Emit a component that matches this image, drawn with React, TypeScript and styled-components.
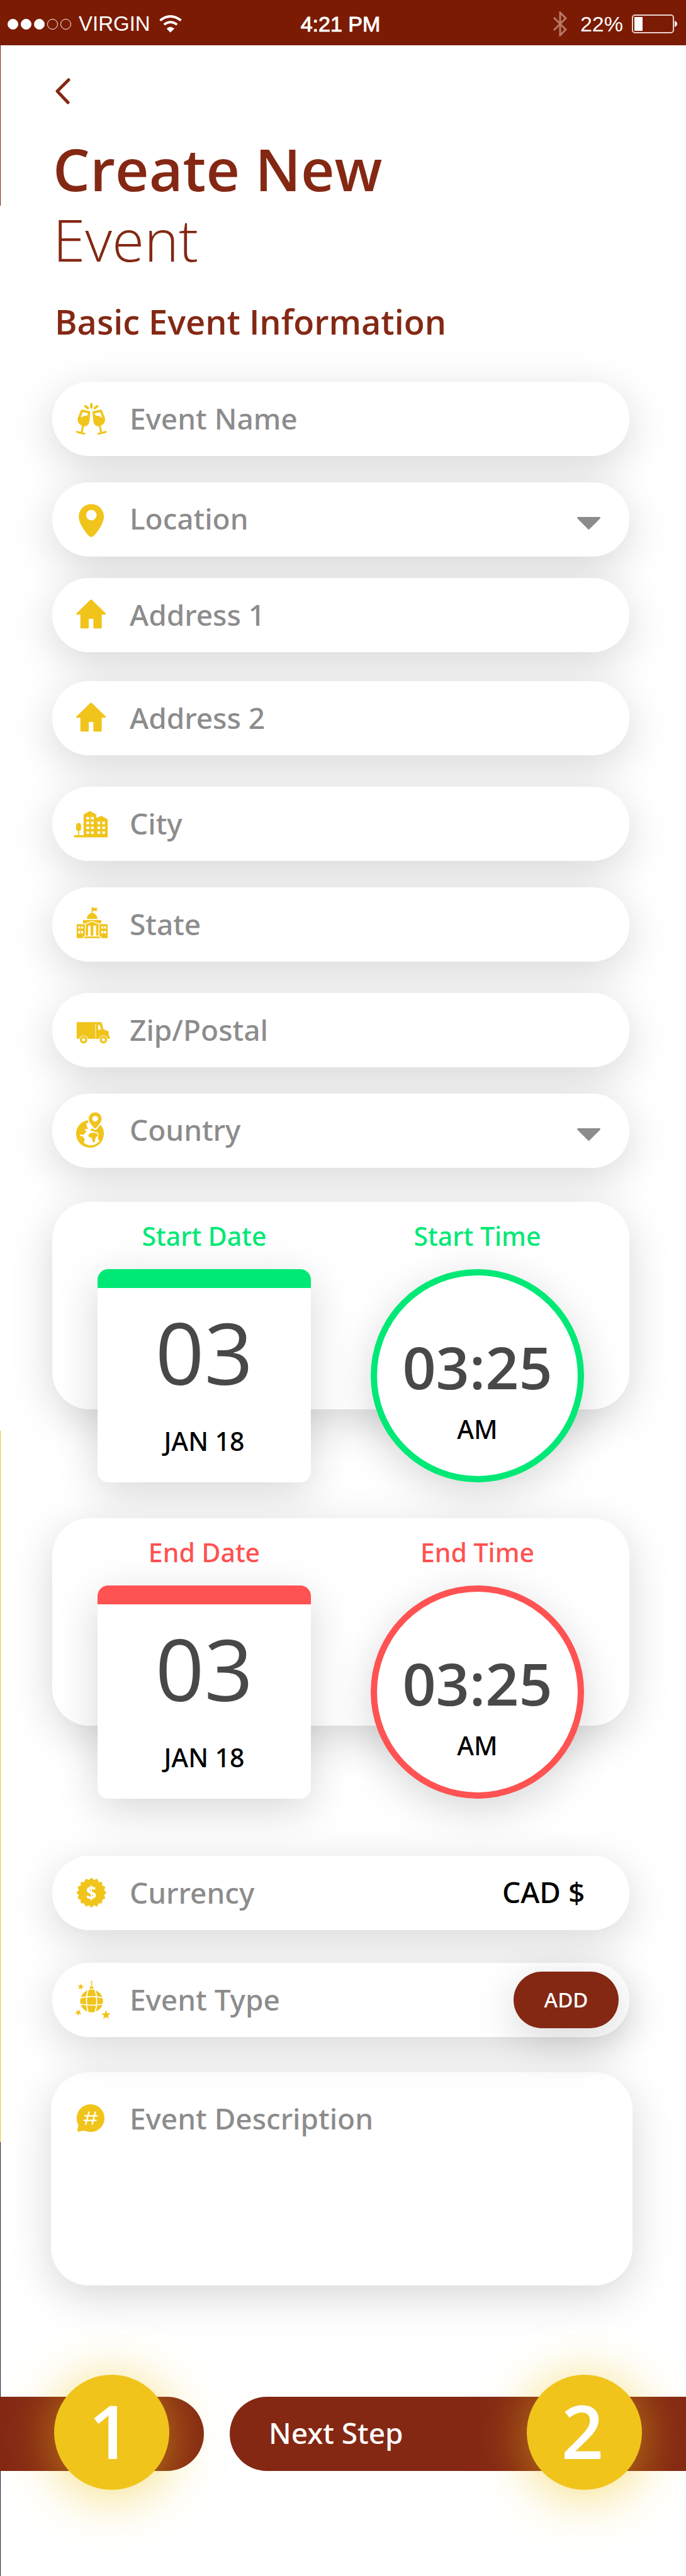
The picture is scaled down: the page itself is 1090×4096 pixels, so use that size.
import React from 'react';
import styled, { createGlobalStyle, css } from 'styled-components';

const color = {
  maroon: '#842814',
  statusBar: '#7b1b03',
  yellow: '#f0c41b',
  green: '#00e976',
  red: '#ff5252',
  grey: '#8c8c8c',
  digits: '#484848',
};

const softShadow = '0 17px 68px rgba(0, 0, 0, 0.16)';

const mediumText = css`
  font-family: 'Noto Sans', 'Open Sans', sans-serif;
  font-weight: 500;
`;

const GlobalStyle = createGlobalStyle`
  *, *::before, *::after { box-sizing: border-box; }
  body {
    margin: 0;
    background: #fff;
    font-family: 'Open Sans', 'Noto Sans', sans-serif;
  }
  button, input, select, textarea {
    margin: 0;
    padding: 0;
    border: 0;
    background: none;
    font: inherit;
    color: inherit;
    outline: none;
  }
  button { cursor: pointer; }
`;

const Page = styled.div`
  min-height: 100vh;
  overflow: hidden;
  background: linear-gradient(
      ${color.maroon} 327px,
      transparent 327px 2275px,
      ${color.yellow} 2275px 3406px,
      #1c2438 3406px
    )
    left top / 1px 100% no-repeat;
`;

/* ---------- status bar ---------- */

const StatusBar = styled.header`
  display: grid;
  grid-template-columns: 1fr auto 1fr;
  align-items: center;
  height: 72px;
  padding: 4px 14px 0 6px;
  background: ${color.statusBar};
  color: #fff;
  font-family: 'Liberation Sans', Arial, sans-serif;
  font-size: 34px;
  line-height: 40px;
`;

const StatusGroup = styled.div<{ $end?: boolean }>`
  display: flex;
  align-items: center;
  justify-content: ${(p) => (p.$end ? 'flex-end' : 'flex-start')};
`;

const Dots = styled.div`
  display: flex;
  gap: 4px;
  margin: 0 12px 0 6px;
`;

const Dot = styled.span<{ $on: boolean }>`
  width: 17px;
  height: 17px;
  border: 1px solid #fff;
  border-radius: 50%;
  background: ${(p) => (p.$on ? '#fff' : 'transparent')};
`;

const Carrier = styled.span`
  font-size: 33px;
`;

const Clock = styled.time`
  -webkit-text-stroke: 1px #fff;
`;

const WifiIcon = styled.svg`
  width: 36px;
  height: 28px;
  margin-left: 14px;
`;

const BluetoothIcon = styled.svg`
  width: 22px;
  height: 40px;
  margin-right: 21px;
`;

const BatteryIcon = styled.svg`
  width: 72px;
  height: 30px;
  margin-left: 14px;
`;

/* ---------- heading ---------- */

const Main = styled.main`
  padding: 52px 90px 0 83px;
  color: ${color.maroon};
`;

const BackButton = styled.button`
  display: block;
  width: 34px;
  height: 42px;
  svg { display: block; width: 34px; height: 42px; }
`;

const Title = styled.h1`
  margin: 46px 0 0;
  padding-left: 1px;
  font-size: 93px;
  font-weight: 600;
  line-height: 112px;
  span { display: block; font-weight: 300; }
`;

const Subtitle = styled.h2`
  margin: 38px 0 59px;
  padding-left: 4px;
  font-size: 54px;
  font-weight: 600;
  line-height: 74px;
`;

/* ---------- form ---------- */

const Form = styled.form`
  display: flex;
  flex-direction: column;
  isolation: isolate;
`;

const Field = styled.label<{ $gap: number }>`
  position: relative;
  display: flex;
  align-items: center;
  gap: 31px;
  height: 118px;
  margin-bottom: ${(p) => p.$gap}px;
  padding: 0 20px 0 32px;
  border-radius: 59px;
  background: #fff;
  color: ${color.grey};
  ${mediumText}
  font-size: 46px;
  line-height: 62px;

  /* the shadow sits below every sibling surface */
  &::before {
    content: '';
    position: absolute;
    inset: 0;
    z-index: -1;
    border-radius: inherit;
    box-shadow: ${softShadow};
  }
`;

const IconBox = styled.svg`
  flex: none;
  width: 60px;
  height: 60px;
  overflow: visible;
  fill: ${color.yellow};
`;

const Input = styled.input`
  flex: 1;
  min-width: 0;
  height: 76px;
  padding-bottom: 3px;
  &::placeholder { color: ${color.grey}; opacity: 1; }
`;

const Select = styled.select`
  flex: 1;
  min-width: 0;
  height: 76px;
  padding-bottom: 4px;
  appearance: none;
`;

const FieldText = styled.span`
  flex: 1;
  padding-bottom: 3px;
`;

const CurrencySelect = styled.select`
  height: 76px;
  margin-right: 50px;
  padding-bottom: 4px;
  appearance: none;
  color: #000;
`;

const Caret = styled.svg`
  flex: none;
  width: 37px;
  height: 20px;
  margin: 12px 26px 0 0;
  fill: ${color.grey};
`;

const AddButton = styled.button`
  flex: none;
  width: 167px;
  height: 90px;
  margin-right: -3px;
  border-radius: 45px;
  background: ${color.maroon};
  box-shadow: ${softShadow};
  color: #fff;
  font-size: 33px;
  line-height: 44px;
`;

const Description = styled.label`
  position: relative;
  display: flex;
  align-items: flex-start;
  gap: 31px;
  height: 339px;
  margin: 0 -5px 0 -2px;
  padding: 43px 40px 32px 34px;
  color: ${color.grey};
  ${mediumText}
  font-size: 46px;
  line-height: 62px;

  &::before {
    content: '';
    position: absolute;
    inset: 0;
    z-index: -2;
    border-radius: 60px;
    background: #fff;
    box-shadow: ${softShadow};
  }
`;

const TextArea = styled.textarea`
  flex: 1;
  height: 100%;
  resize: none;
  line-height: 60px;
  &::placeholder { color: ${color.grey}; opacity: 1; }
`;

/* ---------- date and time panels ---------- */

const Panel = styled.section<{ $gap: number }>`
  position: relative;
  display: grid;
  grid-template-columns: 1fr 1fr;
  column-gap: 95px;
  margin-bottom: ${(p) => p.$gap}px;
  padding: 27px 72px 0;
  border-radius: 60px;
  background: #fff;

  &::before {
    content: '';
    position: absolute;
    inset: 0;
    z-index: -1;
    border-radius: inherit;
    box-shadow: ${softShadow};
  }
`;

const PickerColumn = styled.div`
  display: flex;
  flex-direction: column;
  margin-bottom: -116px;
  text-align: center;
`;

const PickerLabel = styled.span<{ $tone: string }>`
  margin-bottom: 26px;
  color: ${(p) => p.$tone};
  ${mediumText}
  font-size: 41px;
  line-height: 54px;
`;

const DateCard = styled.button<{ $tone: string }>`
  display: flex;
  flex-direction: column;
  align-items: center;
  width: 100%;
  aspect-ratio: 1;
  padding-top: 34px;
  border-top: 30px solid ${(p) => p.$tone};
  border-radius: 17px;
  background: #fff;
  box-shadow: ${softShadow};
`;

const TimeCircle = styled(DateCard)`
  padding-top: 89px;
  border: 10px solid ${(p) => p.$tone};
  border-radius: 50%;
`;

const Day = styled.span`
  margin-bottom: 46px;
  color: ${color.digits};
  font-size: 136px;
  font-weight: 400;
  line-height: 136px;
`;

const Time = styled.span`
  margin-bottom: 16px;
  color: ${color.digits};
  font-size: 93px;
  font-weight: 600;
  line-height: 112px;
`;

const Caption = styled.span`
  color: #000;
  ${mediumText}
  font-size: 41px;
  line-height: 54px;
`;

/* ---------- step navigation ---------- */

const StepNav = styled.nav`
  display: flex;
  gap: 41px;
  padding: 177px 0 167px;
`;

const StepBar = styled.button<{ $next?: boolean }>`
  display: flex;
  flex: ${(p) => (p.$next ? '1' : '0 0 324px')};
  align-items: center;
  justify-content: ${(p) => (p.$next ? 'space-between' : 'flex-end')};
  height: 118px;
  padding: ${(p) => (p.$next ? '0 70px 5px 62px' : '0 55px 5px 0')};
  border-radius: ${(p) => (p.$next ? '59px 0 0 59px' : '0 59px 59px 0')};
  background: ${color.maroon};
  color: #fff;
  ${mediumText}
  font-size: 46px;
  line-height: 62px;
`;

const StepNumber = styled.span`
  flex: none;
  width: 183px;
  height: 183px;
  margin: -33px 0;
  border-radius: 50%;
  background: ${color.yellow};
  box-shadow: 0 8px 85px rgba(240, 196, 27, 0.6);
  font-family: 'Open Sans', 'Noto Sans', sans-serif;
  font-size: 118px;
  font-weight: 600;
  line-height: 178px;
  padding-right: 6px;
  text-align: center;
`;

/* ---------- icons ---------- */

function Icon({ top = -106, children }: { top?: number; children: React.ReactNode }) {
  return (
    <IconBox viewBox={`18 ${top} 212 212`} aria-hidden="true">
      {children}
    </IconBox>
  );
}

const Glass = () => (
  <>
    <path
      fillRule="evenodd"
      d="M72 77 L113 85 Q118 87 118 92 L114 142 Q111 166 88 171 L79 170 Q50 160 48 136 L48 126 L65 82 Q67 77 72 77Z M75 92 L64 123 Q73 116 84 113 Q96 112 104 107 L105 97Z"
    />
    <path
      d="M78 166 L71 201 M44 202 L85 213"
      fill="none"
      stroke={color.yellow}
      strokeWidth="11"
      strokeLinecap="round"
    />
  </>
);

const CheersIcon = () => (
  <Icon top={23}>
    <Glass />
    <g transform="translate(249.500 0) scale(-1 1)">
      <Glass />
    </g>
    <path
      d="M124.500 46V65 M92 58L105 69 M157 58L144 69"
      fill="none"
      stroke={color.yellow}
      strokeWidth="14"
      strokeLinecap="round"
    />
  </Icon>
);

const PinIcon = () => (
  <Icon>
    <path
      fillRule="evenodd"
      d="M124.500 -87 C163 -87 195 -56 195 -17 C195 22 158 72 136 94 Q124 104 113 94 C91 72 54 22 54 -17 C54 -56 86 -87 124.500 -87Z M124.500 -54 A29 29 0 1 0 124.500 5 A29 29 0 1 0 124.500 -54Z"
    />
  </Icon>
);

const HomeIcon = () => (
  <Icon>
    <path d="M119 -86 Q123 -89 127 -86 L206 -9 Q208 -3 203 -3 H183 V71 Q183 75 179 75 H140 Q136 75 136 71 V21 H110 V71 Q110 75 106 75 H67 Q63 75 63 71 V-3 H43 Q37 -3 40 -9Z" />
  </Icon>
);

const CityIcon = () => (
  <Icon>
    <path d="M27 64H50V39Q39 38 39 28V8Q41 -5 53 -5Q65 -5 67 8V28Q67 38 56 39V64H81V-53L116 -72L152 -53V-34L181 -45L216 -26V76H27Z" />
    <g fill="#fff">
      {[-39, -12, 15, 42].map((y) => (
        <path key={y} d={`M96 ${y}h16v14h-16z M122 ${y}h16v14h-16z`} />
      ))}
      {[-12, 15, 42].map((y) => (
        <path key={y} d={`M159 ${y}h15v14h-15z M186 ${y}h15v14h-15z`} />
      ))}
    </g>
  </Icon>
);

const CapitolIcon = () => (
  <Icon top={39}>
    <path d="M126 47H132V51H159L155 60L159 69H132V80Q156 86 159 114H99Q102 86 126 80Z M78 120H180V139H168L129 125L90 139H78Z" />
    <path
      fillRule="evenodd"
      d="M42 143H88V207L72 222H42Z M51 156V168H62V156Z M67 156V168H78V156Z M51 180V195H62V180Z M67 180V195H78V180Z M216 143H170V207L186 222H216Z M180 156V168H191V156Z M196 156V168H207V156Z M180 180V195H191V180Z M196 180V195H207V180Z"
    />
    <path
      fillRule="evenodd"
      d="M93 143L129 129L165 143V208H93Z M106 151V208H120V151Z M136 151V208H151V151Z"
    />
    <path d="M90 212H168L178 222H80Z" />
  </Icon>
);

const TruckIcon = () => (
  <Icon top={635}>
    <path d="M42 696H180L186 710L192 736L222 748V774H228V790H42Z" />
    <path d="M147 705H150V785H147Z M162 711H171L179 737L162 739Z" fill="#fff" />
    {[81, 192].map((x) => (
      <g key={x}>
        <circle cx={x} cy="795" r="24" fill="#fff" />
        <circle cx={x} cy="795" r="21" />
        <circle cx={x} cy="795" r="9" fill="#fff" />
      </g>
    ))}
  </Icon>
);

const GlobeIcon = () => {
  const pin =
    'M146 1205C166 1205 182 1221 182 1240C182 1258 166 1276 152 1292Q146 1298 140 1292C126 1276 110 1258 110 1240C110 1221 126 1205 146 1205Z';
  return (
    <Icon top={1202}>
      <circle cx="117" cy="1325" r="78" />
      <path
        fill="#fff"
        d="M104 1240L108 1262L97 1266L99 1282L106 1297L90 1298L87 1304L95 1306L94 1315L84 1328L62 1330L60 1337L78 1340L80 1348L88 1352L82 1374Q102 1392 125 1390Q156 1386 173 1361L166 1362L161 1350L166 1328L158 1316L160 1306L150 1304L176 1274L164 1240Z"
      />
      <path d="M121 1298L133 1295Q140 1302 152 1304L165 1298L190 1318L180 1330L168 1322L158 1316L142 1315L136 1308L121 1310Z M108 1330L120 1320L134 1318L158 1324L163 1334L148 1348L145 1366L139 1374L132 1370L126 1346L111 1344Z" />
      <path d={pin} fill="#fff" stroke="#fff" strokeWidth="14" />
      <path d={pin} />
      <circle cx="146" cy="1240" r="16" fill="#fff" />
    </Icon>
  );
};

const sealPath = (() => {
  const points: string[] = [];
  for (let i = 0; i < 192; i += 1) {
    const a = (i / 192) * Math.PI * 2;
    const r = 78 + 5 * Math.cos(a * 16);
    points.push(`${(125 + r * Math.sin(a)).toFixed(1)} ${(109 - r * Math.cos(a)).toFixed(1)}`);
  }
  return `M${points.join('L')}Z`;
})();

const SealIcon = () => (
  <Icon top={5}>
    <path d={sealPath} />
    <text x="125" y="146" fill="#fff" fontSize="104" fontWeight="700" textAnchor="middle">
      $
    </text>
  </Icon>
);

const STAR = 'M0 -26L7 -8L26 -7L11 5L16 24L0 13L-16 24L-11 5L-26 -7L-7 -8Z';

const DiscoIcon = () => (
  <Icon top={605}>
    <path d="M123 603H129V633H123Z M116 636H136V648H116Z" />
    <circle cx="126" cy="717" r="64" />
    <path
      d="M108 648Q86 717 108 786 M144 648Q166 717 144 786 M60 700Q126 684 192 700 M60 734Q126 748 192 734"
      fill="none"
      stroke="#fff"
      strokeWidth="6"
    />
    <path d={STAR} transform="translate(207 794)" />
    <path d={STAR} transform="translate(65 636) rotate(10) scale(0.700)" />
    <path d={STAR} transform="translate(52 781) rotate(36) scale(0.700)" />
  </Icon>
);

const HashIcon = () => (
  <Icon top={1277}>
    <path d="M120 1305A78 78 0 1 1 88 1454Q72 1454 56 1459Q45 1460 46 1448L52 1421A78 78 0 0 1 120 1305Z" />
    <path
      d="M111 1349L93 1417 M147 1349L129 1417 M89 1370H157 M83 1396H151"
      fill="none"
      stroke="#fff"
      strokeWidth="8"
      strokeLinecap="round"
    />
  </Icon>
);

const DropCaret = () => (
  <Caret viewBox="0 0 37 20" aria-hidden="true">
    <path d="M1 0H36Q38 1 36 3L20 19Q18 21 17 19L1 3Q-1 1 1 0Z" />
  </Caret>
);

/* ---------- data ---------- */

type FieldSpec = {
  label: string;
  icon: React.ComponentType;
  gap: number;
  options?: boolean;
};

const fields: FieldSpec[] = [
  { label: 'Event Name', icon: CheersIcon, gap: 42 },
  { label: 'Location', icon: PinIcon, gap: 34, options: true },
  { label: 'Address 1', icon: HomeIcon, gap: 46 },
  { label: 'Address 2', icon: HomeIcon, gap: 50 },
  { label: 'City', icon: CityIcon, gap: 42 },
  { label: 'State', icon: CapitolIcon, gap: 50 },
  { label: 'Zip/Postal', icon: TruckIcon, gap: 42 },
  { label: 'Country', icon: GlobeIcon, gap: 54, options: true },
];

const periods = [
  { name: 'Start', tone: color.green, gap: 173 },
  { name: 'End', tone: color.red, gap: 207 },
];

export default function App() {
  return (
    <Page>
      <GlobalStyle />
      <StatusBar>
        <StatusGroup>
          <Dots>
            {[true, true, true, false, false].map((on, i) => (
              <Dot key={i} $on={on} />
            ))}
          </Dots>
          <Carrier>VIRGIN</Carrier>
          <WifiIcon viewBox="898 55 126 98" aria-hidden="true">
            <path
              d="M903 85Q960 39 1019 85 M925 108Q960 80 997 108"
              fill="none"
              stroke="#fff"
              strokeWidth="13"
            />
            <path d="M939 130Q960 112 982 130L960 152Z" fill="#fff" />
          </WifiIcon>
        </StatusGroup>
        <Clock>4:21 PM</Clock>
        <StatusGroup $end>
          <BluetoothIcon viewBox="0 0 22 40" aria-hidden="true">
            <path
              d="M1 10L20 29L11 38V2L20 11L1 30"
              fill="none"
              stroke="#b9796a"
              strokeWidth="3"
            />
          </BluetoothIcon>
          <span>22%</span>
          <BatteryIcon viewBox="0 0 72 30" aria-hidden="true">
            <rect x="1" y="1" width="65" height="28" rx="4" fill="none" stroke="#e8d3cd" strokeWidth="2" />
            <rect x="4" y="4" width="13" height="22" fill="#fff" />
            <path d="M68 10Q72 12 72 15Q72 18 68 20Z" fill="#fff" />
          </BatteryIcon>
        </StatusGroup>
      </StatusBar>

      <Main>
        <BackButton type="button" aria-label="Back">
          <svg viewBox="0 0 34 42" aria-hidden="true">
            <path
              d="M26 3L8 21L25 39"
              fill="none"
              stroke={color.maroon}
              strokeWidth="5"
              strokeLinecap="round"
              strokeLinejoin="round"
            />
          </svg>
        </BackButton>
        <Title>
          Create New
          <span>Event</span>
        </Title>
        <Subtitle>Basic Event Information</Subtitle>

        <Form onSubmit={(e) => e.preventDefault()}>
          {fields.map(({ label, icon: FieldIcon, gap, options }) => (
            <Field key={label} $gap={gap}>
              <FieldIcon />
              {options ? (
                <>
                  <Select aria-label={label}>
                    <option>{label}</option>
                  </Select>
                  <DropCaret />
                </>
              ) : (
                <Input type="text" placeholder={label} aria-label={label} />
              )}
            </Field>
          ))}

          {periods.map(({ name, tone, gap }) => (
            <Panel key={name} $gap={gap}>
              <PickerColumn>
                <PickerLabel $tone={tone} id={`${name}-date`}>{`${name} Date`}</PickerLabel>
                <DateCard type="button" $tone={tone} aria-describedby={`${name}-date`}>
                  <Day>03</Day>
                  <Caption>JAN 18</Caption>
                </DateCard>
              </PickerColumn>
              <PickerColumn>
                <PickerLabel $tone={tone} id={`${name}-time`}>{`${name} Time`}</PickerLabel>
                <TimeCircle type="button" $tone={tone} aria-describedby={`${name}-time`}>
                  <Time>03:25</Time>
                  <Caption>AM</Caption>
                </TimeCircle>
              </PickerColumn>
            </Panel>
          ))}

          <Field $gap={52}>
            <SealIcon />
            <FieldText>Currency</FieldText>
            <CurrencySelect>
              <option>CAD $</option>
            </CurrencySelect>
          </Field>
          <Field $gap={56}>
            <DiscoIcon />
            <Input type="text" placeholder="Event Type" aria-label="Event Type" />
            <AddButton type="button">ADD</AddButton>
          </Field>
          <Description>
            <HashIcon />
            <TextArea placeholder="Event Description" aria-label="Event Description" />
          </Description>
        </Form>
      </Main>

      <StepNav>
        <StepBar type="button" aria-label="Step 1">
          <StepNumber>1</StepNumber>
        </StepBar>
        <StepBar type="button" $next>
          Next Step
          <StepNumber>2</StepNumber>
        </StepBar>
      </StepNav>
    </Page>
  );
}
